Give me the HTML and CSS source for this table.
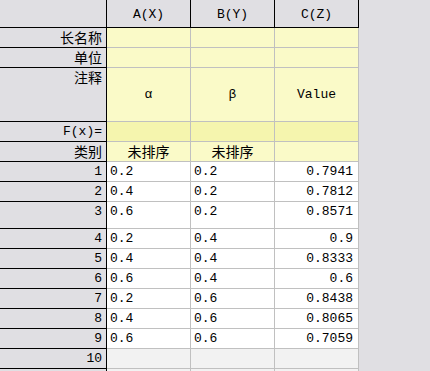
FILE: index.html
```html
<!DOCTYPE html>
<html lang="zh">
<head>
<meta charset="utf-8">
<title>Sheet</title>
<link rel="stylesheet" href="styles.css">
</head>
<body>
<div class="sheet">
  <div class="corner"></div>
  <div class="colhead">A(X)</div>
  <div class="colhead">B(Y)</div>
  <div class="colhead">C(Z)</div>

  <div class="rowhead cjk">长名称</div>
  <div class="meta"></div><div class="meta"></div><div class="meta"></div>

  <div class="rowhead cjk">单位</div>
  <div class="meta"></div><div class="meta"></div><div class="meta"></div>

  <div class="rowhead cjk top">注释</div>
  <div class="meta center mid">α</div><div class="meta center mid">β</div><div class="meta center mid">Value</div>

  <div class="rowhead">F(x)=</div>
  <div class="meta fx"></div><div class="meta fx"></div><div class="meta fx"></div>

  <div class="rowhead cjk">类别</div>
  <div class="meta center cjk">未排序</div><div class="meta center cjk">未排序</div><div class="meta"></div>

  <div class="rowhead">1</div><div class="cell">0.2</div><div class="cell">0.2</div><div class="cell num">0.7941</div>
  <div class="rowhead">2</div><div class="cell">0.4</div><div class="cell">0.2</div><div class="cell num">0.7812</div>
  <div class="rowhead top">3</div><div class="cell top">0.6</div><div class="cell top">0.2</div><div class="cell num top">0.8571</div>
  <div class="rowhead">4</div><div class="cell">0.2</div><div class="cell">0.4</div><div class="cell num">0.9</div>
  <div class="rowhead">5</div><div class="cell">0.4</div><div class="cell">0.4</div><div class="cell num">0.8333</div>
  <div class="rowhead">6</div><div class="cell">0.6</div><div class="cell">0.4</div><div class="cell num">0.6</div>
  <div class="rowhead">7</div><div class="cell">0.2</div><div class="cell">0.6</div><div class="cell num">0.8438</div>
  <div class="rowhead">8</div><div class="cell">0.4</div><div class="cell">0.6</div><div class="cell num">0.8065</div>
  <div class="rowhead">9</div><div class="cell">0.6</div><div class="cell">0.6</div><div class="cell num">0.7059</div>
  <div class="rowhead">10</div><div class="cell empty"></div><div class="cell empty"></div><div class="cell empty"></div>
  <div class="rowhead"></div><div class="cell empty"></div><div class="cell empty"></div><div class="cell empty"></div>
</div>
</body>
</html>
```
FILE: styles.css
```css
html, body {
  margin: 0;
  padding: 0;
  background: #e0dfe3;
  height: 371px;
  overflow: hidden;
}
.sheet {
  display: grid;
  grid-template-columns: 107px 84px 84px 84px;
  grid-template-rows: 28px 20px 20px 54px 20px 20px 20px 20px 27px 20px 20px 20px 20px 20px 20px 20px 20px;
  font-family: "Liberation Mono", "Noto Sans CJK SC", monospace;
  font-size: 13px;
  color: #000;
  width: 359px;
}
.sheet > div {
  box-sizing: border-box;
  border-right: 1px solid #c0c0c0;
  border-bottom: 1px solid #c0c0c0;
  line-height: 19px;
  white-space: nowrap;
  overflow: hidden;
  display: flex;
  align-items: center;
}
.cjk {
  font-family: "Noto Sans CJK SC", "Liberation Mono", sans-serif;
  font-size: 14px;
}
.corner, .colhead {
  background: #e0dfe3;
  border-right-color: #000 !important;
  border-bottom-color: #000 !important;
}
.colhead {
  justify-content: center;
  padding-top: 1px;
}
.rowhead {
  background: #e0dfe3;
  border-right-color: #000 !important;
  border-bottom-color: #000 !important;
  justify-content: flex-end;
  padding-right: 4px;
}
.meta {
  background: #fafac8;
  padding: 0 3px;
}
.meta.fx {
  background: #f5f5ae;
}
.center {
  justify-content: center;
}
.cell {
  background: #fff;
  padding: 0 3px;
}
.cell.num {
  justify-content: flex-end;
  padding-right: 5px;
}
.cell.empty {
  background: #f2f2f2;
}
.top {
  align-items: flex-start !important;
}
.mid {
  align-items: center;
}
```
